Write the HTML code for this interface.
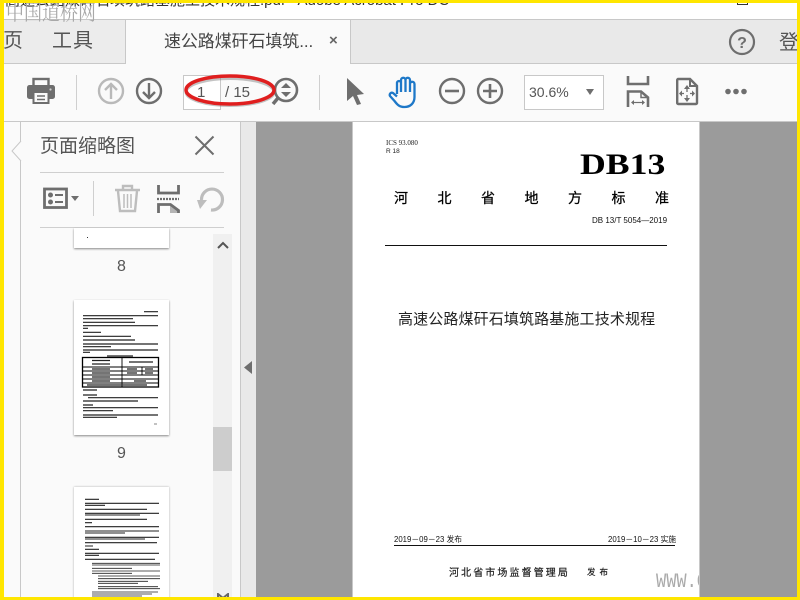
<!DOCTYPE html>
<html><head><meta charset="utf-8"><style>
html,body{margin:0;padding:0;background:#fff}
#r{position:relative;width:800px;height:600px;overflow:hidden;background:#fff;font-family:"Liberation Sans","Noto Sans CJK SC",sans-serif;color:#444}
#r div,#r svg{position:absolute}
.t{white-space:nowrap;line-height:1}
.i{fill:none;stroke:#6e6e6e}
</style></head><body><div id="r">
<div class="t" style="left:5px;top:-7px;font-size:15px;color:#333">高速公路煤矸石填筑路基施工技术规程.pdf - Adobe Acrobat Pro DC</div>
<div style="left:737px;top:0;width:11px;height:5px;border:1px solid #333;box-sizing:border-box"></div>
<div style="left:0;top:19px;width:800px;height:1px;background:#c8c8c8"></div>
<div style="left:0;top:20px;width:800px;height:43px;background:#e9e9e9"></div>
<div style="left:0;top:20px;width:126px;height:43px;background:#ececec;border-right:1px solid #c8c8c8;box-sizing:border-box"></div>
<div style="left:126px;top:20px;width:225px;height:44px;background:#fafafa;border-right:1px solid #c8c8c8;box-sizing:border-box"></div>
<div style="left:0;top:63px;width:126px;height:1px;background:#c8c8c8"></div>
<div style="left:351px;top:63px;width:449px;height:1px;background:#c8c8c8"></div>
<div class="t" style="left:3px;top:31px;font-size:20px;color:#555">页</div>
<div class="t" style="left:52px;top:31px;font-size:20px;color:#555;letter-spacing:1px">工具</div>
<div class="t" style="left:164px;top:33px;font-size:17px;color:#444;letter-spacing:-.1px">速公路煤矸石填筑...</div>
<div class="t" style="left:329px;top:33px;font-size:15px;font-weight:bold;color:#666">×</div>
<svg style="left:728px;top:28px" width="28" height="28"><circle cx="14" cy="14" r="12" class="i" stroke-width="2.2"/><text x="14" y="20" font-size="16" font-weight="bold" fill="#6e6e6e" text-anchor="middle" font-family="Liberation Sans">?</text></svg>
<div class="t" style="left:779px;top:33px;font-size:20px;color:#555">登</div>

<div style="left:0;top:64px;width:800px;height:57px;background:#fafafa"></div>
<div style="left:0;top:121px;width:800px;height:1px;background:#c8c8c8"></div>
<div style="left:76px;top:75px;width:1px;height:35px;background:#cfcfcf"></div>
<div style="left:319px;top:75px;width:1px;height:35px;background:#cfcfcf"></div>
<svg style="left:26px;top:77px" width="30" height="28"><rect x="7.500" y="2" width="15" height="9" fill="none" stroke="#6e6e6e" stroke-width="2.400"/><rect x="1" y="8" width="28" height="14" rx="2.500" fill="#6e6e6e"/><circle cx="24.500" cy="12.500" r="1.100" fill="#d0d0d0"/><rect x="7.500" y="15" width="15" height="11" fill="#fafafa" stroke="#6e6e6e" stroke-width="2"/><path d="M11 19h8M11 22.500h8" stroke="#6e6e6e" stroke-width="1.400"/></svg>
<svg style="left:97px;top:77px" width="28" height="28"><circle cx="14" cy="14" r="12" class="i" style="stroke:#b9b9b9" stroke-width="2.4"/><path d="M14 22V7M8 13l6-6 6 6" class="i" style="stroke:#b9b9b9" stroke-width="2.4"/></svg>
<svg style="left:135px;top:77px" width="28" height="28"><circle cx="14" cy="14" r="12" class="i" stroke-width="2.4"/><path d="M14 6v15M8 15l6 6 6-6" class="i" stroke-width="2.4"/></svg>
<div style="left:183px;top:75px;width:38px;height:35px;background:#fff;border:1px solid #c8c8c8;box-sizing:border-box"></div>
<div class="t" style="left:197px;top:85px;font-size:15px;color:#555">1</div>
<div class="t" style="left:225px;top:85px;font-size:15px;color:#555">/ 15</div>
<svg style="left:270px;top:76px" width="30" height="32"><circle cx="16" cy="14" r="11" class="i" stroke-width="2.6"/><path d="M16 7l-5 5h10zM16 21l-5-5h10z" fill="#6e6e6e"/><path d="M8 22l-5 6" class="i" stroke-width="3.5"/></svg>
<svg style="left:344px;top:76px" width="22" height="30"><path d="M3 2l17 16-7 1 4 9-4 1-4-9-6 5z" fill="#6e6e6e"/></svg>
<svg style="left:388px;top:76px" width="30" height="34"><path d="M9 18V7a2 2 0 0 1 4 0V4a2 2 0 0 1 4.500 0V4a2 2 0 0 1 4.500 0V8a2 2 0 0 1 4.500 0V21c0 6-4 10-10 10-5 0-7-2-10-6L2 20c-1-2 1-4 3-3l4 3.500M13 6v10M17.500 4v12M22 6v10" fill="none" stroke="#1e78c8" stroke-width="2.300" stroke-linejoin="round"/></svg>
<svg style="left:438px;top:77px" width="28" height="28"><circle cx="14" cy="14" r="12" class="i" stroke-width="2.4"/><path d="M7 14h14" class="i" stroke-width="2.6"/></svg>
<svg style="left:476px;top:77px" width="28" height="28"><circle cx="14" cy="14" r="12" class="i" stroke-width="2.4"/><path d="M7 14h14M14 7v14" class="i" stroke-width="2.6"/></svg>
<div style="left:524px;top:75px;width:80px;height:35px;background:#fff;border:1px solid #c8c8c8;box-sizing:border-box"></div>
<div class="t" style="left:529px;top:85px;font-size:14px;color:#555">30.6%</div>
<svg style="left:585px;top:89px" width="10" height="7"><path d="M1 0h8L5 6z" fill="#6e6e6e"/></svg>
<svg style="left:625px;top:76px" width="28" height="32"><path d="M3 0v8h20V0" class="i" stroke-width="2.600"/><path d="M3 31V15.500h13l7 6V31" class="i" stroke-width="2.600"/><path d="M16 15.500v6h7" class="i" stroke-width="1.500"/><path d="M7 26.500h12" class="i" stroke-width="1.200"/><path d="M6 26.500l3-2.500v5zM20 26.500l-3-2.500v5z" fill="#6e6e6e"/></svg>
<svg style="left:675px;top:77px" width="24" height="29"><path d="M2.200 3a1 1 0 0 1 1-1h11.800l7 7v17a1 1 0 0 1-1 1H3.200a1 1 0 0 1-1-1z" class="i" stroke-width="2.400"/><path d="M15 2v7h7" class="i" stroke-width="2"/><path d="M12 12v3M12 18v3M6 16.500h3M15 16.500h3" class="i" stroke-width="1.300"/><path d="M12 8l-3 4h6zM12 25l-3-4h6zM4 16.500l3-3v6zM20 16.500l-3-3v6z" fill="#6e6e6e"/></svg>
<svg style="left:724px;top:86px" width="25" height="11"><circle cx="4" cy="5.500" r="2.800" fill="#6e6e6e"/><circle cx="12" cy="5.500" r="2.800" fill="#6e6e6e"/><circle cx="20" cy="5.500" r="2.800" fill="#6e6e6e"/></svg>

<div style="left:0;top:122px;width:241px;height:478px;background:#fafafa"></div>
<div style="left:20px;top:122px;width:1px;height:478px;background:#c8c8c8"></div>
<svg style="left:10px;top:140px" width="12" height="22"><path d="M11 1L2 11l9 10" fill="#fafafa" stroke="#c8c8c8"/></svg>
<div style="left:240px;top:122px;width:1px;height:478px;background:#c8c8c8"></div>
<div style="left:241px;top:122px;width:15px;height:478px;background:#e9e9e9"></div>
<svg style="left:244px;top:361px" width="9" height="13"><path d="M8 0v13L0 6.500z" fill="#6e6e6e"/></svg>
<div class="t" style="left:40px;top:137px;font-size:19px;color:#555">页面缩略图</div>
<svg style="left:194px;top:135px" width="21" height="21"><path d="M1.500 1.500l18 18M19.500 1.500l-18 18" class="i" stroke-width="2"/></svg>
<div style="left:40px;top:172px;width:184px;height:1px;background:#cfcfcf"></div>
<div style="left:40px;top:227px;width:184px;height:1px;background:#cfcfcf"></div>
<div style="left:93px;top:181px;width:1px;height:35px;background:#cfcfcf"></div>
<svg style="left:43px;top:187px" width="37" height="23"><rect x="1.500" y="2" width="22" height="18.500" class="i" stroke-width="2.800"/><circle cx="7.500" cy="8" r="2.500" fill="#6e6e6e"/><circle cx="7.500" cy="15" r="2.500" fill="#6e6e6e"/><path d="M12 8h8M12 15h8" class="i" stroke-width="2"/><path d="M28 9h8l-4 5z" fill="#6e6e6e"/></svg>
<svg style="left:114px;top:183px" width="27" height="30"><path d="M1 7h25M9 6V3h9v3" fill="none" stroke="#bdbdbd" stroke-width="2.400"/><path d="M4 8l2 20h15l2-20" fill="none" stroke="#bdbdbd" stroke-width="2.400"/><path d="M10 11v14M13.500 11v14M17 11v14" stroke="#bdbdbd" stroke-width="1.500"/></svg>
<svg style="left:157px;top:185px" width="23" height="28"><path d="M1.500 0v8h20V0" class="i" stroke-width="2.800"/><path d="M0 14h22" class="i" stroke-width="2.200" stroke-dasharray="2 1"/><path d="M1.500 28V19.500h12l8 6V28" class="i" stroke-width="2.800"/><path d="M13 20l8 6v2h-8z" fill="#6e6e6e" opacity=".5"/></svg>
<svg style="left:197px;top:185px" width="28" height="28"><path d="M4.500 15A10.500 10.500 0 1 1 14 25" fill="none" stroke="#bdbdbd" stroke-width="3.200"/><path d="M0 15h10l-7 9z" fill="#bdbdbd"/></svg>

<div style="left:74px;top:228px;width:95px;height:20px;background:#fff;box-shadow:0 1px 2px #888"></div>
<div style="left:87px;top:237px;width:1px;height:1px;background:#333"></div>
<div class="t" style="left:117px;top:259px;font-size:16px;color:#555">8</div>

<div style="left:74px;top:300px;width:95px;height:135px;background:#fff;box-shadow:0 1px 2px #888"></div>
<svg style="left:74px;top:300px;filter:blur(.3px)" width="95" height="135" stroke="#222" stroke-width="1.200" fill="none">
<path d="M70 11.700h14M9 15.700h75M9 18.700h50M9 22.300h52M9 25.700h75M9 28.300h5M9 32.300h18M9 36.300h48M9 40h52M9 44h75M9 46.700h28M9 50h75M9 52.300h7M33 56h26"/>
<rect x="8.500" y="57.500" width="76" height="29.500" stroke="#000" stroke-width="1.300"/>
<path d="M9 67h75M9 71h75M9 75h75M9 79h75M9 83h75M48 58v29" stroke="#000" stroke-width=".9"/>
<path d="M68 67v8" stroke="#000" stroke-width=".9"/>
<path d="M18 60.500h18M18 64h18M55 62h24M18 69h18M18 73h18M18 77h18M18 81h18M53 69h10M71 69h8M53 73h10M71 73h8M60 81h12M13 85h60M9 90h14M9 95h14M14 97.700h70M9 101h55M9 105h10M9 107.700h75M9 110.700h30M9 115h75M9 117.300h34" stroke="#222"/>
<path d="M80 124h3" stroke="#999"/>
</svg>
<div class="t" style="left:117px;top:446px;font-size:16px;color:#555">9</div>

<div style="left:74px;top:487px;width:95px;height:113px;background:#fff;box-shadow:0 0 2px #aaa"></div>
<svg style="left:74px;top:487px;filter:blur(.3px)" width="95" height="113" stroke="#222" stroke-width="1.100" fill="none">
<path d="M11 12.300h14M11 16.300h74M11 18.300h20M11 22.300h62M11 26.300h74M11 28h55M11 32.300h62M11 35.700h7M11 39.700h74M11 44h74M11 46h40M11 50.300h74M11 52h60M11 55.700h72M11 59h8M11 62.300h14M11 66.300h74M11 68.300h14M11 72.300h70"/>
<path stroke-width=".8" d="M18 76.300h68M18 78h68M18 81.300h40M18 84h68M18 86.300h40M24 89h62M24 91.700h62M24 94.300h50M24 96.300h40M24 99.700h60M24 101.700h62M18 105h66M18 107h60M18 109h50"/>
</svg>

<div style="left:213px;top:234px;width:19px;height:366px;background:#f0f0f0"></div>
<div style="left:213px;top:427px;width:19px;height:44px;background:#cdcdcd"></div>
<svg style="left:217px;top:241px" width="12" height="8"><path d="M1 7l5-5 5 5" fill="none" stroke="#555" stroke-width="2"/></svg>
<svg style="left:217px;top:593px" width="12" height="7"><path d="M1 6V1l5 4 5-4v5" fill="none" stroke="#666" stroke-width="2"/></svg>

<div style="left:256px;top:122px;width:544px;height:478px;background:#9b9b9b"></div>
<div style="left:352px;top:122px;width:348px;height:478px;background:#fff;border-left:1px solid #c8c8c8;border-right:1px solid #c8c8c8;box-sizing:border-box"></div>
<div class="t" style="left:386px;top:140px;font-size:7px;color:#222;font-family:'Liberation Serif',serif">ICS 93.080</div>
<div class="t" style="left:386px;top:149px;font-size:6.500px;color:#222">R 18</div>
<div class="t" style="left:580px;top:150px;font-size:30px;font-weight:bold;color:#000;font-family:'Liberation Serif',serif;transform:scaleX(1.190);transform-origin:0 0">DB13</div>
<div class="t" style="left:394px;top:191px;font-size:14px;color:#000;-webkit-text-stroke:.25px #000;letter-spacing:29.5px">河北省地方标准</div>
<div class="t" style="left:592px;top:217px;font-size:8px;color:#111">DB 13/T 5054—2019</div>
<div style="left:385px;top:245px;width:282px;height:1px;background:#111"></div>
<div class="t" style="left:398px;top:312px;font-size:15px;color:#222;letter-spacing:.13px">高速公路煤矸石填筑路基施工技术规程</div>
<div class="t" style="left:394px;top:536px;font-size:7.800px;color:#111">2019－09－23 发布</div>
<div class="t" style="left:608px;top:536px;font-size:7.800px;color:#111">2019－10－23 实施</div>
<div style="left:394px;top:545px;width:281px;height:1px;background:#111"></div>
<div class="t" style="left:449px;top:569px;font-size:10px;color:#222;-webkit-text-stroke:.2px #222;letter-spacing:2.100px">河北省市场监督管理局</div>
<div class="t" style="left:587px;top:568px;font-size:8.500px;color:#222;-webkit-text-stroke:.2px #222;letter-spacing:4px">发布</div>
<div style="left:656px;top:572px;width:43px;height:22px;overflow:hidden"><div class="t" style="left:0;top:1px;font-size:20px;color:#aaa;font-family:'Liberation Mono',monospace;transform:scaleX(.85);transform-origin:0 0">WWW.C</div></div>

<div class="t" style="left:6px;top:2px;font-size:18px;color:#a8a8a8;font-family:'Liberation Serif','Noto Serif CJK SC',serif;transform:scaleY(1.200);transform-origin:0 0">中国道桥网</div>

<svg style="left:180px;top:68px" width="100" height="42"><ellipse cx="50" cy="24" rx="44" ry="13.500" fill="none" stroke="#888" stroke-width="3" opacity=".5"/><ellipse cx="50" cy="22" rx="44" ry="14" fill="none" stroke="#e01e1e" stroke-width="3.500"/></svg>

<div style="left:0;top:0;width:800px;height:3px;background:#ffe600"></div>
<div style="left:0;top:597px;width:800px;height:3px;background:#ffe600"></div>
<div style="left:0;top:0;width:4px;height:600px;background:#ffe600"></div>
<div style="left:797px;top:0;width:3px;height:600px;background:#ffe600"></div>
</div></body></html>
